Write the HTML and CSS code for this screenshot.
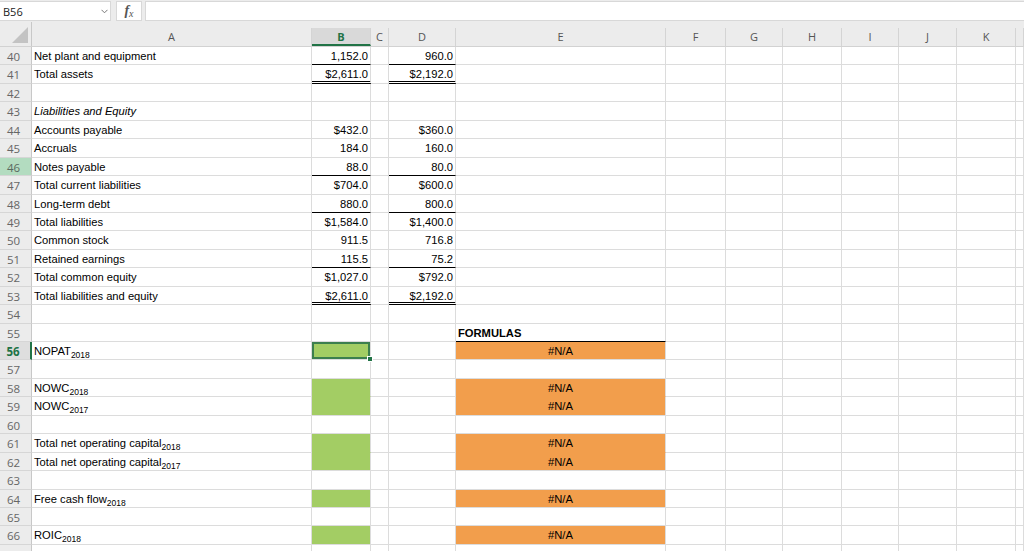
FILE: index.html
```html
<!DOCTYPE html>
<html>
<head>
<meta charset="utf-8">
<link rel="stylesheet" href="styles.css">
</head>
<body>
<div class="topbar">
  <div class="namebox"><span>B56</span><svg class="chev" width="7" height="5" viewBox="0 0 7 5"><polyline points="0.5,0.8 3.5,3.8 6.5,0.8" fill="none" stroke="#777" stroke-width="1"/></svg></div>
  <div class="fxbox"><span class="fx">f</span><span class="fxx">x</span></div>
  <div class="formula"></div>
</div>
<div class="sheet">
  <div class="row hdr"><span class="corner"><svg width="16" height="16" viewBox="0 0 16 16"><polygon points="16,0 16,16 0,16" fill="#c3c3c3"/></svg></span><span>A</span><span class="selcol">B</span><span>C</span><span>D</span><span>E</span><span>F</span><span>G</span><span>H</span><span>I</span><span>J</span><span>K</span><span></span></div>

  <div class="row"><span class="n">40</span><span class="a">Net plant and equipment</span><span class="num ul">1,152.0</span><span></span><span class="num ul">960.0</span><span></span><span></span><span></span><span></span><span></span><span></span><span></span><span></span></div>
  <div class="row"><span class="n">41</span><span class="a">Total assets</span><span class="num dbl">$2,611.0</span><span></span><span class="num dbl">$2,192.0</span><span></span><span></span><span></span><span></span><span></span><span></span><span></span><span></span></div>
  <div class="row"><span class="n">42</span><span class="a"></span><span></span><span></span><span></span><span></span><span></span><span></span><span></span><span></span><span></span><span></span><span></span></div>
  <div class="row"><span class="n">43</span><span class="a it">Liabilities and Equity</span><span></span><span></span><span></span><span></span><span></span><span></span><span></span><span></span><span></span><span></span><span></span></div>
  <div class="row"><span class="n">44</span><span class="a">Accounts payable</span><span class="num">$432.0</span><span></span><span class="num">$360.0</span><span></span><span></span><span></span><span></span><span></span><span></span><span></span><span></span></div>
  <div class="row"><span class="n">45</span><span class="a">Accruals</span><span class="num">184.0</span><span></span><span class="num">160.0</span><span></span><span></span><span></span><span></span><span></span><span></span><span></span><span></span></div>
  <div class="row"><span class="n hl">46</span><span class="a">Notes payable</span><span class="num ul">88.0</span><span></span><span class="num ul">80.0</span><span></span><span></span><span></span><span></span><span></span><span></span><span></span><span></span></div>
  <div class="row"><span class="n">47</span><span class="a">Total current liabilities</span><span class="num">$704.0</span><span></span><span class="num">$600.0</span><span></span><span></span><span></span><span></span><span></span><span></span><span></span><span></span></div>
  <div class="row"><span class="n">48</span><span class="a">Long-term debt</span><span class="num ul">880.0</span><span></span><span class="num ul">800.0</span><span></span><span></span><span></span><span></span><span></span><span></span><span></span><span></span></div>
  <div class="row"><span class="n">49</span><span class="a">Total liabilities</span><span class="num">$1,584.0</span><span></span><span class="num">$1,400.0</span><span></span><span></span><span></span><span></span><span></span><span></span><span></span><span></span></div>
  <div class="row"><span class="n">50</span><span class="a">Common stock</span><span class="num">911.5</span><span></span><span class="num">716.8</span><span></span><span></span><span></span><span></span><span></span><span></span><span></span><span></span></div>
  <div class="row"><span class="n">51</span><span class="a">Retained earnings</span><span class="num ul">115.5</span><span></span><span class="num ul">75.2</span><span></span><span></span><span></span><span></span><span></span><span></span><span></span><span></span></div>
  <div class="row"><span class="n">52</span><span class="a">Total common equity</span><span class="num">$1,027.0</span><span></span><span class="num">$792.0</span><span></span><span></span><span></span><span></span><span></span><span></span><span></span><span></span></div>
  <div class="row"><span class="n">53</span><span class="a">Total liabilities and equity</span><span class="num dbl">$2,611.0</span><span></span><span class="num dbl">$2,192.0</span><span></span><span></span><span></span><span></span><span></span><span></span><span></span><span></span></div>
  <div class="row"><span class="n">54</span><span class="a"></span><span></span><span></span><span></span><span></span><span></span><span></span><span></span><span></span><span></span><span></span><span></span></div>
  <div class="row"><span class="n">55</span><span class="a"></span><span></span><span></span><span></span><span class="head ul">FORMULAS</span><span></span><span></span><span></span><span></span><span></span><span></span><span></span></div>
  <div class="row"><span class="n selrow">56</span><span class="a">NOPAT<sub>2018</sub></span><span class="green sel"><b class="handle"></b></span><span></span><span></span><span class="orange">#N/A</span><span></span><span></span><span></span><span></span><span></span><span></span><span></span></div>
  <div class="row"><span class="n">57</span><span class="a"></span><span></span><span></span><span></span><span></span><span></span><span></span><span></span><span></span><span></span><span></span><span></span></div>
  <div class="row"><span class="n">58</span><span class="a">NOWC<sub>2018</sub></span><span class="green join"></span><span></span><span></span><span class="orange join">#N/A</span><span></span><span></span><span></span><span></span><span></span><span></span><span></span></div>
  <div class="row"><span class="n">59</span><span class="a">NOWC<sub>2017</sub></span><span class="green"></span><span></span><span></span><span class="orange">#N/A</span><span></span><span></span><span></span><span></span><span></span><span></span><span></span></div>
  <div class="row"><span class="n">60</span><span class="a"></span><span></span><span></span><span></span><span></span><span></span><span></span><span></span><span></span><span></span><span></span><span></span></div>
  <div class="row"><span class="n">61</span><span class="a">Total net operating capital<sub>2018</sub></span><span class="green join"></span><span></span><span></span><span class="orange join">#N/A</span><span></span><span></span><span></span><span></span><span></span><span></span><span></span></div>
  <div class="row"><span class="n">62</span><span class="a">Total net operating capital<sub>2017</sub></span><span class="green"></span><span></span><span></span><span class="orange">#N/A</span><span></span><span></span><span></span><span></span><span></span><span></span><span></span></div>
  <div class="row"><span class="n">63</span><span class="a"></span><span></span><span></span><span></span><span></span><span></span><span></span><span></span><span></span><span></span><span></span><span></span></div>
  <div class="row"><span class="n">64</span><span class="a">Free cash flow<sub>2018</sub></span><span class="green"></span><span></span><span></span><span class="orange">#N/A</span><span></span><span></span><span></span><span></span><span></span><span></span><span></span></div>
  <div class="row"><span class="n">65</span><span class="a"></span><span></span><span></span><span></span><span></span><span></span><span></span><span></span><span></span><span></span><span></span><span></span></div>
  <div class="row"><span class="n">66</span><span class="a">ROIC<sub>2018</sub></span><span class="green"></span><span></span><span></span><span class="orange">#N/A</span><span></span><span></span><span></span><span></span><span></span><span></span><span></span></div>
  <div class="row"><span class="n"></span><span class="a"></span><span></span><span></span><span></span><span></span><span></span><span></span><span></span><span></span><span></span><span></span><span></span></div>
</div>
</body>
</html>
```

FILE: styles.css
```css
html, body {
  margin: 0;
  padding: 0;
  background: #ffffff;
  overflow: hidden;
  width: 1024px;
  height: 551px;
}

body {
  font-family: "Liberation Sans", Arial, sans-serif;
  font-size: 11.2px;
  color: #000;
}

.topbar {
  height: 22px;
  background: #ececec;
  display: flex;
  align-items: flex-start;
  box-sizing: border-box;
  padding-top: 1px;
}

.namebox {
  width: 111px;
  height: 20px;
  background: #fff;
  border: 1px solid #d8d8d8;
  border-left: none;
  box-sizing: border-box;
  display: flex;
  align-items: center;
  justify-content: space-between;
  padding: 0 2px 0 3px;
  font-family: "Open Sans", "Noto Sans", sans-serif;
  font-size: 11px;
  color: #222;
}

.fxbox {
  margin-left: 5px;
  width: 26px;
  height: 20px;
  background: #fff;
  border: 1px solid #d8d8d8;
  box-sizing: border-box;
  display: flex;
  align-items: center;
  justify-content: center;
  font-family: "Liberation Serif", serif;
  color: #555;
}

.fx {
  font-style: italic;
  font-size: 14px;
  font-weight: bold;
}

.fxx {
  font-style: italic;
  font-size: 10px;
  margin-top: 4px;
}

.formula {
  margin-left: 3px;
  flex: 1;
  height: 20px;
  background: #fff;
  border: 1px solid #d8d8d8;
  border-right: none;
  box-sizing: border-box;
}

.row {
  display: grid;
  grid-template-columns: 32px 280px 59px 18px 67px 210px 60px 57px 59px 57px 58px 59px 8px;
  height: 18.45px;
}

.row > span {
  box-sizing: border-box;
  border-right: 1px solid #dcdcdc;
  border-bottom: 1px solid #dcdcdc;
  line-height: 17px;
  padding-top: 1px;
  white-space: nowrap;
  overflow: hidden;
  position: relative;
}

.row.hdr {
  height: 25px;
  background: #ececec;
  align-items: end;
  border-bottom: 1px solid #d2d2d2;
  box-sizing: border-box;
}

.row.hdr > span {
  height: 18px;
  padding-top: 0;
  border-bottom: none;
  border-right: 1px solid #d4d4d4;
  text-align: center;
  font-family: "Open Sans", "Noto Sans", sans-serif;
  font-size: 11px;
  line-height: 17px;
  color: #555;
}

.row.hdr > span.corner {
  height: 24px;
  border-right: 1px solid #c8c8c8;
  display: flex;
  align-items: flex-end;
  justify-content: flex-end;
  padding: 0 3px 3px 0;
}

.row.hdr > span.selcol {
  background: #d9d9d9;
  color: #217346;
  font-weight: bold;
  border-bottom: 2px solid #217346;
}

.row > span.n {
  background: #ececec;
  border-right: 1px solid #c8c8c8;
  border-bottom: 1px solid #d6d6d6;
  text-align: center;
  font-family: "Open Sans", "Noto Sans", sans-serif;
  font-size: 11.5px;
  color: #666;
  padding-right: 4px;
}

.row > span.n.hl {
  background: #b3dcc0;
  color: #5a6a60;
}

.row > span.n.selrow {
  background: #dedede;
  color: #217346;
  font-weight: bold;
  border-right: 2px solid #217346;
}

.a {
  padding-left: 2px;
}

.it {
  font-style: italic;
}

.num {
  text-align: right;
  padding-right: 2px;
}

.row > span.ul {
  border-bottom: 1px solid #000;
}

.row > span.dbl {
  border-bottom: 3px double #000;
}

.head {
  font-weight: bold;
  padding-left: 2px;
}

sub {
  font-size: 8.5px;
  vertical-align: -3px;
  line-height: 0;
}

.row > span.green {
  background: #a3cd64;
}

.row > span.orange {
  background: #f29e4c;
  text-align: center;
}

.row > span.green.join {
  border-bottom-color: #a3cd64;
}

.row > span.orange.join {
  border-bottom-color: #f29e4c;
}

.row > span.sel {
  overflow: visible;
  box-shadow: inset 0 0 0 2px #3c7f4e;
}

.handle {
  position: absolute;
  right: -3px;
  bottom: -3px;
  width: 4px;
  height: 4px;
  background: #217346;
  border: 1px solid #fff;
  z-index: 2;
}
```
